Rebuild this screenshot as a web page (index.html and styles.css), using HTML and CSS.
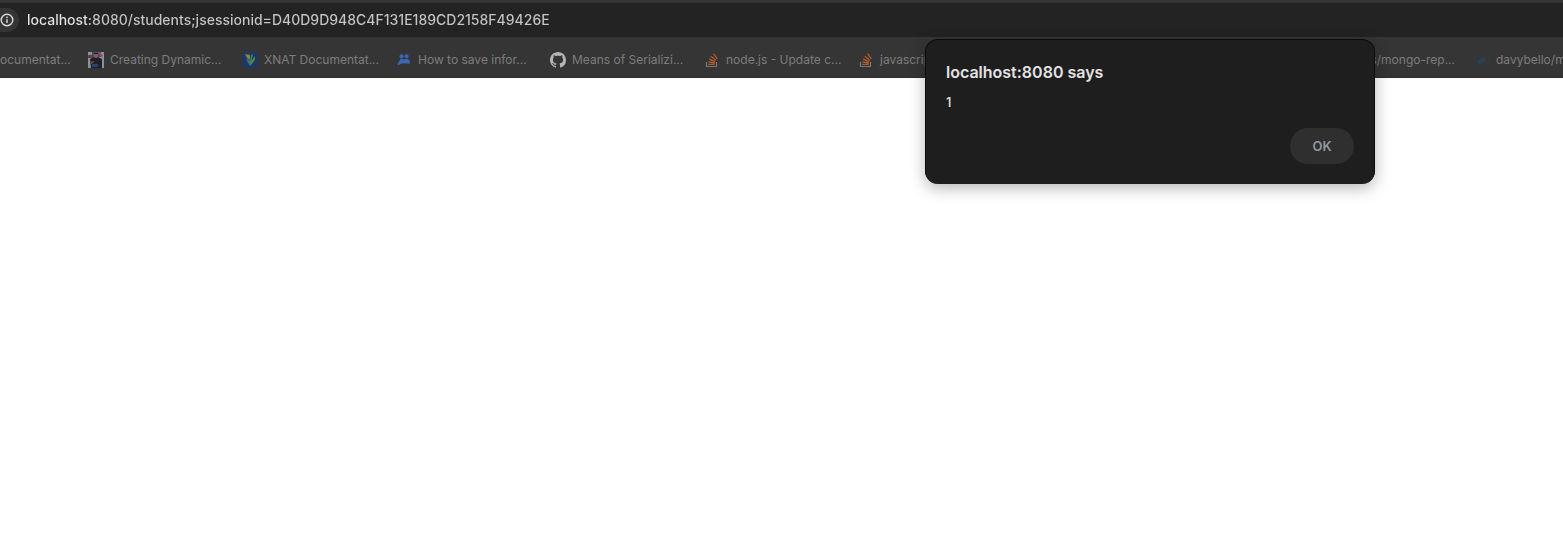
FILE: index.html
```html
<!DOCTYPE html>
<html lang="en">
<head>
<meta charset="utf-8">
<title>localhost:8080</title>
<link rel="stylesheet" href="styles.css">
</head>
<body>
<header class="chrome">
  <div class="address-bar">
    <button class="site-info" aria-label="View site information">
      <svg width="14" height="14" viewBox="0 0 14 14"><circle cx="7" cy="7" r="5.8" fill="none" stroke="#dcdcdc" stroke-width="1.4"/><path d="M7 6.2v3.9" stroke="#dcdcdc" stroke-width="1.4"/><circle cx="7" cy="4.3" r=".85" fill="#dcdcdc"/></svg>
    </button>
    <input class="url" type="text" aria-label="Address" spellcheck="false" value="localhost:8080/students;jsessionid=D40D9D948C4F131E189CD2158F49426E">
  </div>
  <nav class="bookmarks" aria-label="Bookmarks">
    <a class="bookmark bookmark-first" href="#">ocumentat...</a>
    <a class="bookmark" href="#">
      <svg width="16" height="16" viewBox="0 0 16 16"><path fill="#8f8f9c" d="M0 0h16v16H0z"/><path fill="#3d4c80" d="M4 0h9v5H4z"/><path fill="#b0454f" d="M10 0h2l3 4-2 1z"/><path fill="#5a4248" d="M0 3h5v3H0z"/><path fill="#1f2128" d="M2 7l4-2h4l4 2v9H3z"/><path fill="#85604f" d="M6 2h4v2L9 6H7L6 4z"/><path fill="#1f1f28" d="M6 1h4v1H6z"/><path fill="#83533e" d="M3 10l3-1v1l-3 2z"/><path fill="#2c416e" d="M4 12h6v3H4z"/></svg>
      <span>Creating Dynamic...</span>
    </a>
    <a class="bookmark" href="#">
      <svg width="16" height="16" viewBox="0 0 16 16"><rect width="16" height="16" rx="3" fill="#1f3763"/><path fill="#8c852f" d="M3 2l5 1v5L5 6z"/><path fill="#307d79" d="M9 3l2-1-1 6-2 1z"/><path fill="#4b8748" d="M13 4v4l-5 6-1-5 3-1z"/><path fill="#347494" d="M4 6l3 2 1 6-2-3z"/></svg>
      <span>XNAT Documentat...</span>
    </a>
    <a class="bookmark" href="#">
      <svg width="16" height="16" viewBox="0 0 16 16" fill="#3d67b5"><circle cx="5.500" cy="4.200" r="2"/><circle cx="10.600" cy="4.200" r="2"/><path d="M3.500 9c0-1.600 1-2.200 2.300-2.200.9 0 1.700.4 2.200 1 .5-.6 1.400-1 2.500-1 1.600 0 2.600.9 3.200 2.600l.4 2.100H5.600l-3.800 2c-.3-2.200.3-3.300 1.700-4.500z"/></svg>
      <span>How to save infor...</span>
    </a>
    <a class="bookmark" href="#">
      <svg width="16" height="16" viewBox="0 0 16 16" fill="#b5b5b5"><path d="M8 0C3.580 0 0 3.580 0 8c0 3.540 2.290 6.530 5.470 7.590.4.070.55-.17.55-.38 0-.19-.01-.82-.01-1.490-2.010.37-2.530-.49-2.690-.94-.09-.23-.48-.94-.82-1.130-.28-.15-.68-.52-.01-.53.63-.01 1.080.58 1.230.82.72 1.210 1.870.87 2.330.66.07-.52.28-.87.51-1.070-1.780-.2-3.640-.89-3.640-3.950 0-.87.31-1.590.82-2.150-.08-.2-.36-1.020.08-2.120 0 0 .67-.21 2.200.82.64-.18 1.320-.27 2-.27s1.360.09 2 .27c1.530-1.040 2.200-.82 2.200-.82.44 1.100.16 1.920.08 2.120.51.56.82 1.270.82 2.150 0 3.070-1.870 3.750-3.650 3.950.29.25.54.73.54 1.480 0 1.070-.01 1.930-.01 2.200 0 .21.15.46.55.38A8.010 8.010 0 0 0 16 8c0-4.420-3.580-8-8-8z"/></svg>
      <span>Means of Serializi...</span>
    </a>
    <a class="bookmark" href="#">
      <svg width="16" height="16" viewBox="0 0 16 16" fill="none"><path d="M2.500 10v4.500h10V10" stroke="#77797b" stroke-width="1.200"/><path d="M4.300 12.400h6.400M4.500 9.900l6.300 1.100M5.200 7.200l5.900 2.500M6.900 4.300l4.900 4M9.600 1.700l3.700 5.200" stroke="#b35a28" stroke-width="1.300"/></svg>
      <span>node.js - Update c...</span>
    </a>
    <a class="bookmark" href="#">
      <svg width="16" height="16" viewBox="0 0 16 16" fill="none"><path d="M2.500 10v4.500h10V10" stroke="#77797b" stroke-width="1.200"/><path d="M4.300 12.400h6.400M4.500 9.900l6.300 1.100M5.200 7.200l5.900 2.500M6.900 4.300l4.900 4M9.600 1.700l3.700 5.200" stroke="#b35a28" stroke-width="1.300"/></svg>
      <span>javascript</span>
    </a>
    <a class="bookmark bookmark-wide" href="#">s/mongo-rep...</a>
    <a class="bookmark" href="#">
      <svg width="16" height="16" viewBox="0 0 16 16"><circle cx="8" cy="8" r="7.400" fill="none" stroke="#303c45"/><path fill="#2b4150" d="M3 8h2V7h2V6h2V5h2v3l2-1c0 2-1 2-2 2-1 2-3 3-5 3S3 11 3 8z"/></svg>
      <span>davybello/m</span>
    </a>
  </nav>
</header>
<main class="page"></main>
<section class="alert" role="alertdialog" aria-labelledby="alert-title" aria-describedby="alert-message">
  <h1 class="alert-title" id="alert-title">localhost:8080 says</h1>
  <p class="alert-message" id="alert-message">1</p>
  <button class="alert-ok">OK</button>
</section>
</body>
</html>
```

FILE: styles.css
```css
* {
  box-sizing: border-box;
}

body {
  margin: 0;
  min-height: 100vh;
  display: flex;
  flex-direction: column;
  position: relative;
  overflow: hidden;
  background: #fff;
  font-family: Inter, "Liberation Sans", sans-serif;
}

.chrome {
  padding-top: 3px;
  background: #353535;
  border-bottom: 1px solid #2e2c2d;
}

.address-bar {
  display: flex;
  align-items: center;
  gap: 8px;
  height: 34px;
  background: #232323;
}

.site-info {
  display: flex;
  align-items: center;
  justify-content: flex-end;
  width: 19px;
  height: 24px;
  padding: 0 5px 0 0;
  border: 0;
  border-radius: 0 12px 12px 0;
  background: #353535;
}

.site-info svg {
  flex: none;
}

.url {
  flex: 1;
  min-width: 0;
  padding: 0;
  border: 0;
  outline: 0;
  background: linear-gradient(90deg, #e6e6e6 62px, #c6c6c6 62px);
  background-clip: text;
  color: transparent;
  font: 500 14px/20px Inter, "Liberation Sans", sans-serif;
}

.bookmarks {
  display: flex;
  height: 40px;
  padding-top: 5px;
  overflow: hidden;
}

.bookmark {
  display: flex;
  flex: none;
  align-items: center;
  gap: 6px;
  width: 154px;
  color: #7d7d7d;
  font-size: 12px;
  line-height: 16px;
  white-space: nowrap;
  text-decoration: none;
}

.bookmark-first {
  width: 88px;
}

.bookmark-wide {
  justify-content: flex-end;
  width: 462px;
  padding-right: 19px;
}

.page {
  flex: 1;
}

.alert {
  position: absolute;
  top: 39px;
  right: 188px;
  display: flex;
  flex-direction: column;
  width: 450px;
  padding: 20px;
  border: 1px solid #0b0b0b;
  border-width: 1px 1px 0 1px;
  border-radius: 13px;
  background: #1e1e1e;
  color: #e3e3e3;
  box-shadow: 0 4px 16px rgba(20, 0, 10, 0.3);
}

.alert-title {
  margin: 0;
  font-size: 16px;
  font-weight: 600;
  line-height: 24px;
}

.alert-message {
  margin: 8px 0 16px;
  font-size: 13px;
  font-weight: 500;
  line-height: 20px;
}

.alert-ok {
  align-self: flex-end;
  width: 64px;
  height: 36px;
  padding: 0;
  border: 0;
  border-radius: 18px;
  background: #2f2f2f;
  color: #92979b;
  font: 600 13px/20px Inter, "Liberation Sans", sans-serif;
}
```
